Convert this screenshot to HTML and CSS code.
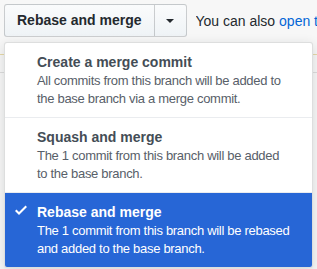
FILE: index.html
```html
<!DOCTYPE html>
<html>
<head>
<meta charset="utf-8">
<link rel="stylesheet" href="styles.css">
</head>
<body>
<div class="page">
  <div class="backdrop">
    <div class="bg-line bg-line-yellow"></div>
    <div class="bg-line bg-line-gray"></div>
  </div>
  <div class="merge-row">
    <div class="btn-group">
      <button class="btn btn-main">Rebase and merge</button>
      <button class="btn btn-caret" aria-label="Select merge method"><span class="caret"></span></button>
    </div>
    <p class="also">You can also <a href="#" class="link">open this in GitHub Desktop</a></p>
  </div>
  <div class="menu">
    <div class="menu-item">
      <span class="check"></span>
      <div class="item-body">
        <div class="item-title">Create a merge commit</div>
        <div class="item-desc">All commits from this branch will be added to the base branch via a merge commit.</div>
      </div>
    </div>
    <div class="menu-item">
      <span class="check"></span>
      <div class="item-body">
        <div class="item-title">Squash and merge</div>
        <div class="item-desc">The 1 commit from this branch will be added to&nbsp;the base branch.</div>
      </div>
    </div>
    <div class="menu-item selected">
      <span class="check">
        <svg width="12" height="16" viewBox="0 0 12 16"><path fill="#fff" fill-rule="evenodd" d="M12 5l-8 8-4-4 1.5-1.5L4 10l6.5-6.5L12 5z"/></svg>
      </span>
      <div class="item-body">
        <div class="item-title">Rebase and merge</div>
        <div class="item-desc">The 1 commit from this branch will be rebased and added to the base branch.</div>
      </div>
    </div>
  </div>
</div>
</body>
</html>
```

FILE: styles.css
```css
* { box-sizing: border-box; }
html, body { margin: 0; padding: 0; }
body {
  background: #f7f7f7;
  font-family: "Liberation Sans", Arial, sans-serif;
  color: #24292e;
  width: 317px;
  height: 269px;
  overflow: hidden;
}
.page {
  position: relative;
  width: 317px;
  height: 269px;
  overflow: hidden;
}
.backdrop {
  position: absolute;
  left: 0;
  top: 42px;
  right: 0;
  bottom: 0;
}
.bg-line {
  position: absolute;
  left: 0;
  right: 0;
  height: 1px;
}
.bg-line-yellow { top: 12px; background: #e6d9a8; }
.bg-line-gray { top: 30px; background: #dcdcdc; }
.merge-row {
  display: flex;
  align-items: center;
  padding: 4px 0 0 4px;
  white-space: nowrap;
}
.btn-group {
  display: flex;
  flex: none;
}
.btn {
  font-family: inherit;
  font-size: 14px;
  font-weight: bold;
  line-height: 19px;
  color: #24292e;
  background: linear-gradient(#fafbfc, #eff3f6);
  border: 1px solid rgba(27, 31, 35, 0.2);
  padding: 6px 12px;
  margin: 0;
  height: 33px;
}
.btn-main {
  border-radius: 3px 0 0 3px;
}
.btn-caret {
  width: 32px;
  border-left: 0;
  border-radius: 0 3px 3px 0;
  display: flex;
  align-items: center;
  justify-content: center;
  padding: 0;
}
.caret {
  width: 0;
  height: 0;
  border-left: 4px solid transparent;
  border-right: 4px solid transparent;
  border-top: 4px solid #24292e;
}
.also {
  margin: 0 0 0 9px;
  font-size: 14px;
  color: #24292e;
  flex: 1;
  min-width: 0;
  overflow: hidden;
}
.link {
  color: #0366d6;
  text-decoration: none;
}
.menu {
  position: absolute;
  left: 4px;
  top: 42px;
  width: 309px;
  background: #fff;
  border: 1px solid rgba(27, 31, 35, 0.15);
  border-radius: 3px;
  box-shadow: 0 3px 12px rgba(27, 31, 35, 0.15);
  overflow: hidden;
}
.menu-item {
  display: flex;
  padding: 9px 10px 9px 10px;
  border-bottom: 1px solid #eaecef;
}
.menu-item:last-child {
  border-bottom: 0;
}
.check {
  width: 12px;
  height: 16px;
  margin-right: 10px;
  margin-top: 0;
  flex: none;
}
.check svg { display: block; }
.item-body {
  flex: 1;
  min-width: 0;
}
.item-title {
  font-size: 14px;
  font-weight: bold;
  line-height: 20px;
  color: #444d56;
}
.item-desc {
  font-size: 13px;
  letter-spacing: -0.3px;
  line-height: 18px;
  color: #586069;
  padding-right: 5px;
}
.menu-item.selected {
  background: #2766d6;
}
.menu-item.selected .item-title,
.menu-item.selected .item-desc {
  color: #fff;
}
```
